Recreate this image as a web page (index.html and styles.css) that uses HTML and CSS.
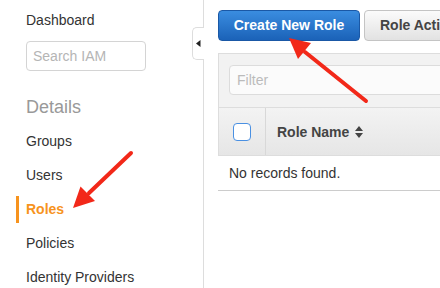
FILE: index.html
```html
<!DOCTYPE html>
<html>
<head>
<meta charset="utf-8">
<link rel="stylesheet" href="styles.css">
</head>
<body>
<div class="page">
  <aside class="sidebar">
    <div class="dash">Dashboard</div>
    <div class="search">Search IAM</div>
    <div class="section">Details</div>
    <ul class="nav">
      <li><span class="link">Groups</span></li>
      <li><span class="link">Users</span></li>
      <li><span class="link active">Roles</span></li>
      <li><span class="link">Policies</span></li>
      <li><span class="link">Identity Providers</span></li>
    </ul>
    <div class="collapse"><svg width="5" height="7" viewBox="0 0 5 7"><path d="M4.5 0 L0 3.5 L4.5 7 Z" fill="#222"/></svg></div>
  </aside>
  <main class="main">
    <div class="toolbar">
      <div class="btn primary">Create New Role</div>
      <div class="btn secondary">Role Actions</div>
    </div>
    <div class="panel">
      <div class="filterbar"><div class="filter">Filter</div></div>
      <div class="thead">
        <div class="cbcell"><div class="checkbox"></div></div>
        <div class="th">Role Name <svg class="sort" width="8" height="12" viewBox="0 0 8 12"><path d="M4 0 L8 5 L0 5 Z M4 12 L8 7 L0 7 Z" fill="#444"/></svg></div>
      </div>
    </div>
    <div class="empty">No records found.</div>
  </main>
</div>
<svg class="annot" width="440" height="288" viewBox="0 0 440 288">
  <g stroke="#f22819" stroke-width="4" stroke-linecap="round" fill="#f22819">
    <line x1="131" y1="153" x2="89" y2="193"/>
    <line x1="366" y1="101" x2="305" y2="52"/>
  </g>
  <g fill="#f22819">
    <polygon points="73,208 80.5,186.5 95,201"/>
    <polygon points="289,38 311,43 298,59"/>
  </g>
</svg>
</body>
</html>
```
FILE: styles.css
```css
html, body {
  margin: 0;
  padding: 0;
  background: #fff;
  overflow: hidden;
}
body {
  width: 440px;
  height: 288px;
  position: relative;
  font-family: "Liberation Sans", Arial, Helvetica, sans-serif;
  font-size: 14px;
  color: #333;
}
.page {
  display: flex;
  height: 288px;
}
.sidebar {
  position: relative;
  flex: 0 0 204px;
  box-sizing: border-box;
  border-right: 1px solid #ddd;
  padding: 10px 0 0 16px;
}
.dash {
  line-height: 20px;
  padding-left: 10px;
}
.search {
  margin: 11px 0 0 10px;
  width: 120px;
  height: 30px;
  box-sizing: border-box;
  border: 1px solid #d4d4d4;
  border-radius: 4px;
  padding-left: 6px;
  line-height: 28px;
  color: #b5b5b5;
  font-size: 14px;
}
.section {
  margin-top: 24px;
  line-height: 24px;
  font-size: 18px;
  color: #999;
  padding-left: 10px;
}
.nav {
  list-style: none;
  margin: 5px 0 0 0;
  padding: 0;
}
.nav li {
  height: 34px;
  display: flex;
  align-items: center;
}
.link {
  display: block;
  line-height: 27px;
  padding-left: 10px;
  color: #333;
}
.link.active {
  border-left: 3px solid #f7931e;
  padding-left: 7px;
  color: #f7931e;
  font-weight: bold;
}
.collapse {
  position: absolute;
  left: 192px;
  top: 27px;
  width: 12px;
  height: 33px;
  box-sizing: border-box;
  background: #fff;
  border: 1px solid #ddd;
  border-right: none;
  border-radius: 5px 0 0 5px;
  display: flex;
  align-items: center;
  justify-content: center;
}
.main {
  flex: 0 0 auto;
  padding: 10px 0 0 14px;
}
.toolbar {
  display: flex;
  gap: 4px;
}
.btn {
  height: 31px;
  box-sizing: border-box;
  border-radius: 4px;
  font-weight: bold;
  font-size: 14px;
  line-height: 29px;
  padding: 0 15px;
  white-space: nowrap;
}
.primary {
  width: 142px;
  background: linear-gradient(#3a8de0, #1b62b8);
  border: 1px solid #1a58a6;
  color: #fff;
  text-align: center;
  padding: 0;
}
.secondary {
  background: linear-gradient(#fbfbfb, #e2e2e2);
  border: 1px solid #c4c4c4;
  color: #444;
}
.panel {
  margin-top: 12px;
  width: 600px;
  border: 1px solid #ddd;
  border-right: none;
  box-sizing: border-box;
}
.filterbar {
  height: 54px;
  background: #f2f2f2;
  padding: 11px 0 0 10px;
  box-sizing: border-box;
  border-bottom: 1px solid #ddd;
}
.filter {
  width: 400px;
  height: 30px;
  box-sizing: border-box;
  background: #fbfbfb;
  border: 1px solid #dcdcdc;
  border-radius: 4px;
  padding-left: 7px;
  line-height: 28px;
  color: #bbb;
}
.thead {
  display: flex;
  height: 47px;
  background: linear-gradient(#f3f3f3, #e6e6e6);
}
.cbcell {
  flex: 0 0 46px;
  border-right: 1px solid #d8d8d8;
  display: flex;
  align-items: center;
  justify-content: center;
}
.checkbox {
  width: 18px;
  height: 18px;
  box-sizing: border-box;
  background: #fff;
  border: 1.5px solid #4a90e2;
  border-radius: 4px;
}
.th {
  display: flex;
  align-items: center;
  padding-left: 11px;
  font-weight: bold;
  color: #444;
  gap: 5px;
}
.sort {
  margin-left: 1px;
}
.empty {
  width: 600px;
  height: 35px;
  box-sizing: border-box;
  border-bottom: 1px solid #ccc;
  padding-left: 11px;
  line-height: 34px;
  color: #333;
}
.annot {
  position: absolute;
  left: 0;
  top: 0;
  pointer-events: none;
}
```
